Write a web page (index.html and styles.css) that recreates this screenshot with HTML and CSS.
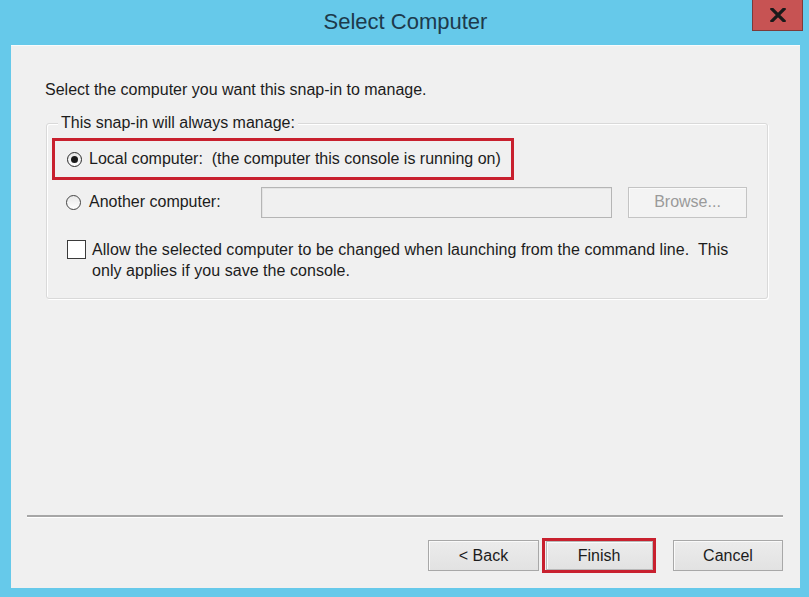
FILE: index.html
```html
<!DOCTYPE html>
<html>
<head>
<meta charset="utf-8">
<link rel="stylesheet" href="styles.css">
</head>
<body>
<div class="window">
  <div class="titlebar">
    <div class="title">Select Computer</div>
    <div class="close"><svg width="16" height="14" viewBox="0 0 16 14"><path d="M2 1 L14 13 M14 1 L2 13" stroke="#1a1a1a" stroke-width="3.2" stroke-linecap="square"/></svg></div>
  </div>
  <div class="client">
    <div class="intro">Select the computer you want this snap-in to manage.</div>
    <div class="group">
      <div class="legend">This snap-in will always manage:</div>
      <div class="row-local">
        <div class="highlight">
          <span class="radio checked"><span class="dot"></span></span>
          <span class="label">Local computer:&nbsp; (the computer this console is running on)</span>
        </div>
      </div>
      <div class="row-another">
        <span class="radio"></span>
        <span class="label">Another computer:</span>
        <div class="input"></div>
        <div class="btn disabled browse">Browse...</div>
      </div>
      <div class="row-check">
        <span class="checkbox"></span>
        <span class="check-label">Allow the selected computer to be changed when launching from the command line.&nbsp; This<br>only applies if you save the console.</span>
      </div>
    </div>
    <div class="spacer"></div>
    <div class="separator"></div>
    <div class="buttons">
      <div class="btn">&lt; Back</div>
      <div class="finish-frame"><div class="btn finish">Finish</div></div>
      <div class="btn cancel">Cancel</div>
    </div>
  </div>
</div>
</body>
</html>
```
FILE: styles.css
```css
html, body {
  margin: 0;
  padding: 0;
}
body {
  width: 809px;
  height: 597px;
  background: #66c9ea;
  font-family: "Liberation Sans", Arial, sans-serif;
  color: #1c1c1c;
  overflow: hidden;
}
.window {
  width: 809px;
  height: 597px;
  display: flex;
  flex-direction: column;
}
.titlebar {
  position: relative;
  height: 45px;
  flex: none;
  display: flex;
  align-items: center;
  justify-content: center;
}
.title {
  font-size: 22px;
  color: #1d3a4c;
  margin-top: -1px;
  margin-left: 2px;
}
.close {
  position: absolute;
  top: 0;
  left: 752px;
  width: 51px;
  height: 31px;
  background: #c75353;
  border: 1px solid #7d3a3a;
  border-top: none;
  box-sizing: border-box;
  display: flex;
  align-items: center;
  justify-content: center;
}
.client {
  flex: 1;
  margin: 0 9px 9px 11px;
  background: #f0f0f0;
  border-top: 1px solid #f8fbfc;
  display: flex;
  flex-direction: column;
  padding: 0 17px 0 16px;
}
.intro {
  font-size: 16px;
  letter-spacing: 0;
  margin: 34px 0 0 18px;
  line-height: 20px;
}
.group {
  margin: 23px 0 0 19px;
  width: 722px;
  height: 176px;
  box-sizing: border-box;
  border: 1px solid #d9d9d9;
  box-shadow: inset 1px 1px 0 #ffffff, 1px 1px 0 #ffffff;
  border-radius: 3px;
  position: relative;
  font-size: 16px;
  letter-spacing: 0;
}
.legend {
  position: absolute;
  top: -11px;
  left: 11px;
  padding: 0 3px;
  background: #f0f0f0;
  line-height: 20px;
}
.row-local {
  margin: 14px 0 0 5px;
}
.highlight {
  width: 462px;
  height: 42px;
  box-sizing: border-box;
  border: 3px solid #c8202e;
  display: flex;
  align-items: center;
  padding-left: 12px;
}
.radio {
  width: 15px;
  height: 15px;
  box-sizing: border-box;
  border-radius: 50%;
  border: 1px solid #444;
  background: linear-gradient(#e8e8e8, #ffffff);
  display: inline-flex;
  align-items: center;
  justify-content: center;
  flex: none;
}
.radio.checked {
  border-color: #2a2a2a;
}
.dot {
  width: 7px;
  height: 7px;
  border-radius: 50%;
  background: #1a1a1a;
}
.label {
  margin-left: 7px;
}
.row-another {
  display: flex;
  align-items: center;
  margin: 6px 0 0 19px;
  height: 32px;
}
.row-another .label {
  margin-left: 8px;
  width: 172px;
  flex: none;
}
.input {
  width: 351px;
  height: 31px;
  box-sizing: border-box;
  border: 1px solid #b5b5b5;
  background: #f0f0f0;
  box-shadow: inset 1px 1px 0 #e4e4e4;
  flex: none;
}
.btn {
  width: 111px;
  height: 31px;
  box-sizing: border-box;
  border: 1px solid #a8a8a8;
  background: linear-gradient(#ececec, #e2e2e2);
  box-shadow: inset 1px 1px 0 #fafafa;
  display: flex;
  align-items: center;
  justify-content: center;
  font-size: 16px;
  color: #1c1c1c;
  flex: none;
}
.btn.disabled {
  color: #9a9a9a;
  border-color: #c4c4c4;
  background: #f3f3f3;
}
.browse {
  margin-left: 16px;
  width: 119px;
}
.row-check {
  display: flex;
  align-items: flex-start;
  margin: 21px 0 0 20px;
}
.checkbox {
  width: 19px;
  height: 19px;
  box-sizing: border-box;
  border: 1px solid #3a3a3a;
  background: #ffffff;
  flex: none;
  margin-top: 1px;
}
.check-label {
  margin-left: 6px;
  line-height: 21px;
  letter-spacing: 0.05px;
}
.spacer {
  flex: 1;
}
.separator {
  height: 2px;
  background: #a6a6a6;
  border-bottom: 1px solid #ffffff;
  width: 756px;
  flex: none;
}
.buttons {
  display: flex;
  justify-content: flex-end;
  align-items: center;
  margin: 20px 0 15px 0;
}
.finish-frame {
  margin-left: 3px;
  width: 114px;
  height: 35px;
  box-sizing: border-box;
  border: 3px solid #c8202e;
  display: flex;
  align-items: center;
  justify-content: center;
}
.finish {
  width: 107px;
  height: 29px;
  border-color: #b8b8b8;
}
.cancel {
  margin-left: 17px;
  width: 110px;
}
```
